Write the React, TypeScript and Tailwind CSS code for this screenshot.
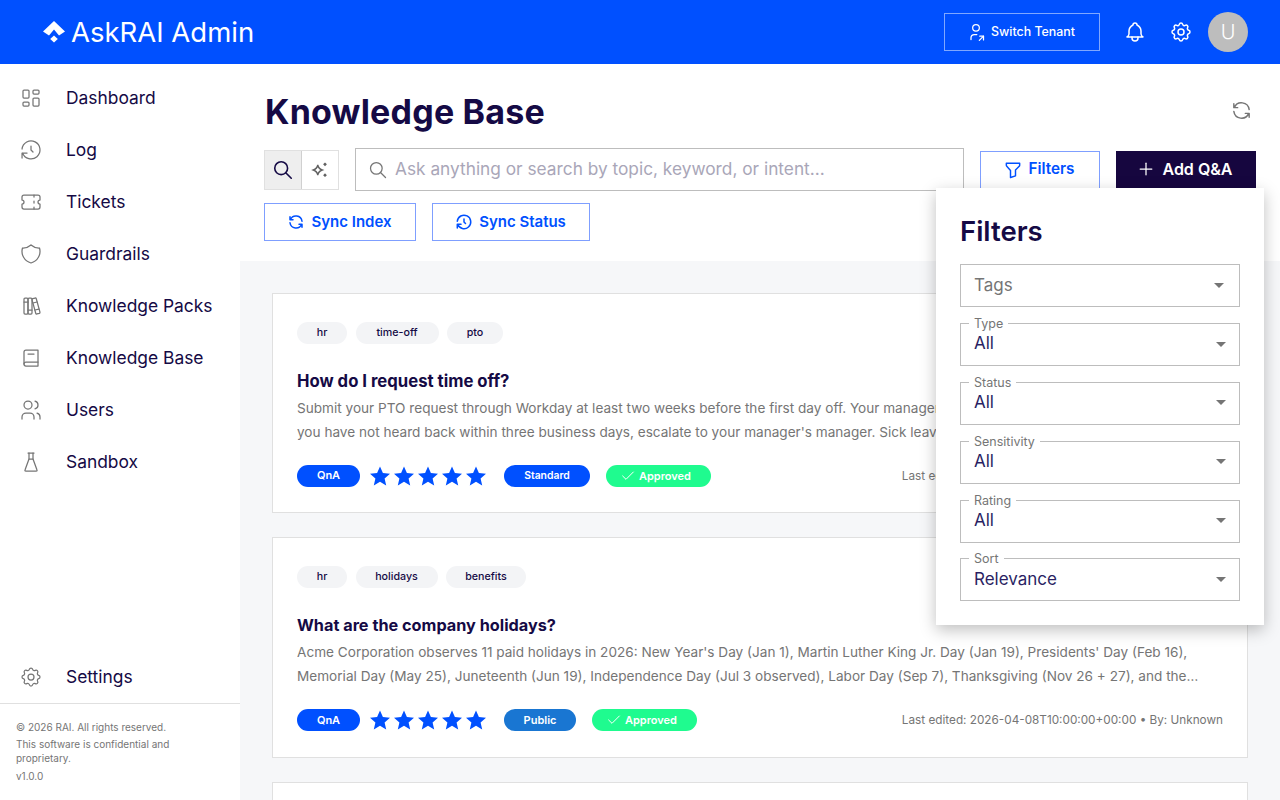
import { Check } from "lucide-react";
import { TbLayoutDashboard, TbHistory, TbTicket, TbShield, TbBooks, TbBook2, TbUsers, TbFlask, TbSettings, TbBell, TbUserShare, TbRefresh, TbSearch, TbFilter, TbPlus } from "react-icons/tb";

const navItems = [
  { label: "Dashboard", icon: TbLayoutDashboard },
  { label: "Log", icon: TbHistory },
  { label: "Tickets", icon: TbTicket },
  { label: "Guardrails", icon: TbShield },
  { label: "Knowledge Packs", icon: TbBooks },
  { label: "Knowledge Base", icon: TbBook2 },
  { label: "Users", icon: TbUsers },
  { label: "Sandbox", icon: TbFlask },
];

const entries = [
  {
    tags: [
      { label: "hr", width: "w-[50px]" },
      { label: "time-off", width: "w-[83px]" },
      { label: "pto", width: "w-[56px]" },
    ],
    title: "How do I request time off?",
    titleSize: "text-[16.7px]",
    lines: [
      "Submit your PTO request through Workday at least two weeks before the first day off. Your manager will review it and respond by email. If",
      "you have not heard back within three business days, escalate to your manager's manager. Sick leave does not need advance approval and the…",
    ],
    sensitivity: "Standard",
    sensitivityClass: "bg-[#0050ff] w-[86px] text-[10.4px]",
  },
  {
    tags: [
      { label: "hr", width: "w-[50px]" },
      { label: "holidays", width: "w-[82px]" },
      { label: "benefits", width: "w-[80px]" },
    ],
    title: "What are the company holidays?",
    titleSize: "text-[16.25px]",
    lines: [
      "Acme Corporation observes 11 paid holidays in 2026: New Year's Day (Jan 1), Martin Luther King Jr. Day (Jan 19), Presidents' Day (Feb 16),",
      "Memorial Day (May 25), Juneteenth (Jun 19), Independence Day (Jul 3 observed), Labor Day (Sep 7), Thanksgiving (Nov 26 + 27), and the…",
    ],
    sensitivity: "Public",
    sensitivityClass: "bg-[#1976d2] w-[72px] text-[11px]",
  },
];

const filters = [
  { label: "Type", value: "All" },
  { label: "Status", value: "All" },
  { label: "Sensitivity", value: "All" },
  { label: "Rating", value: "All" },
  { label: "Sort", value: "Relevance" },
];

function Caret() {
  return <span className="w-0 h-0 border-l-[5px] border-r-[5px] border-t-[5px] border-l-transparent border-r-transparent border-t-[#757575]" />;
}

function Logo() {
  return (
    <svg width="22" height="22" viewBox="0 0 22 22" fill="white">
      <path d="M11 0 L22 10.500 L16 14.500 L11 8.500 L6 14.500 L0 10.500 Z" />
      <path d="M11 14.500 L14.800 18 L11 21.500 L7.200 18 Z" />
    </svg>
  );
}

function SparkleIcon() {
  return (
    <svg width="20" height="20" viewBox="0 0 18 18" fill="none" stroke="#616161" strokeWidth="1.2">
      <path d="M7 4.500 C7.500 7 8.500 8.200 11 9 C8.500 9.800 7.500 11 7 13.500 C6.500 11 5.500 9.800 3 9 C5.500 8.200 6.500 7 7 4.500 Z" />
      <path d="M13.500 2.200 L15.200 3.900 L13.500 5.600 L11.800 3.900 Z" fill="#616161" stroke="none" />
      <path d="M13.500 12 L15.200 13.700 L13.500 15.400 L11.800 13.700 Z" fill="#616161" stroke="none" />
    </svg>
  );
}

function EntryCard({ entry }: { entry: (typeof entries)[number] }) {
  return (
    <div className="bg-white border border-[#e0e0e0] h-[220.4px] shrink-0 px-6 pt-[28px]">
      <div className="flex gap-[8.5px]">
        {entry.tags.map((tag) => (
          <span key={tag.label} className={`h-[22px] rounded-full bg-[#f3f4f6] text-[10.7px] font-medium text-[#150a45] flex items-center justify-center ${tag.width}`}>
            {tag.label}
          </span>
        ))}
      </div>
      <h3 className={`mt-[24.5px] leading-[24px] font-bold text-[#150a45] ${entry.titleSize}`}>{entry.title}</h3>
      <div className="mt-[3px] text-[13.6px] leading-[24px] text-[#757575]">
        {entry.lines.map((line) => (
          <p key={line} className="truncate">{line}</p>
        ))}
      </div>
      <div className="mt-[20.5px] flex items-center">
        <span className="w-[63px] h-[22px] pb-[1px] rounded-full bg-[#0050ff] text-white text-[11px] font-semibold flex items-center justify-center">QnA</span>
        <div className="ml-2 flex">
          {[0, 1, 2, 3, 4].map((i) => (
            <svg key={i} width="24" height="24" viewBox="0 0 24 24" fill="#0050ff">
              <path d="M12 2.500l2.900 6.600 7.100.7-5.400 4.700 1.600 7-6.200-3.700-6.200 3.700 1.600-7L2 9.800l7.100-.7z" />
            </svg>
          ))}
        </div>
        <span className={`ml-4 h-[22px] rounded-full text-white font-semibold flex items-center justify-center ${entry.sensitivityClass}`}>
          {entry.sensitivity}
        </span>
        <span className="ml-4 w-[105px] h-[22px] pr-[6px] rounded-full bg-[#1ffb8f] text-white text-[11px] font-semibold flex items-center justify-center gap-[3px]">
          <Check size={16} strokeWidth={1.5} />
          Approved
        </span>
        <span className="ml-auto mt-[1px] text-[11.75px] text-[#757575]">Last edited: 2026-04-08T10:00:00+00:00 • By: Unknown</span>
      </div>
    </div>
  );
}

export default function App() {
  return (
    <div className="relative w-[1280px] h-[800px] overflow-hidden bg-white font-['Inter',sans-serif] text-[#150a45]">
      <header className="h-16 bg-[#0050ff] flex items-center pl-[43px] pr-8">
        <Logo />
        <span className="ml-[6px] mt-[2px] text-[27.5px] text-white">AskRAI Admin</span>
        <button className="ml-auto w-[156px] h-[38px] border border-white/50 pr-[3px] flex items-center justify-center gap-[5px] text-white text-[12.4px] font-medium">
          <TbUserShare size={20} strokeWidth={1.5} />
          Switch Tenant
        </button>
        <TbBell size={24} strokeWidth={1.5} className="ml-[23px] text-white" />
        <TbSettings size={24} strokeWidth={1.5} className="ml-[22px] text-white" />
        <div className="ml-[15px] w-10 h-10 rounded-full bg-[#bdbdbd] text-white text-[20px] font-light flex items-center justify-center">U</div>
      </header>

      <div className="flex h-[736px]">
        <aside className="w-[240px] shrink-0 flex flex-col bg-white">
          <nav className="pt-[8px]">
            {navItems.map((item) => (
              <div key={item.label} className="h-[52px] flex items-center pl-[19px]">
                <item.icon size={24} strokeWidth={1.25} className="text-[#757575]" />
                <span className="ml-[23px] text-[17.4px]">{item.label}</span>
              </div>
            ))}
          </nav>
          <div className="mt-auto">
            <div className="h-[52px] flex items-center pl-[19px]">
              <TbSettings size={24} strokeWidth={1.25} className="text-[#757575]" />
              <span className="ml-[23px] text-[17.4px]">Settings</span>
            </div>
            <div className="border-t border-[#e0e0e0] h-[97px] px-4 pt-4 text-[10px] leading-[14px] text-[#757575]">
              <p>© 2026 RAI. All rights reserved.</p>
              <p className="mt-[3px]">This software is confidential and proprietary.</p>
              <p className="mt-1">v1.0.0</p>
            </div>
          </div>
        </aside>

        <main className="flex-1 flex flex-col min-w-0">
          <div className="h-[197px] shrink-0 px-6 pt-[25px]">
            <div className="flex items-center justify-between h-[44px]">
              <h1 className="ml-[1px] text-[34px] font-bold tracking-[0.2px]">Knowledge Base</h1>
              <TbRefresh size={23} strokeWidth={1.5} className="text-[#757575] mr-[3px] mb-[2px]" />
            </div>
            <div className="mt-[15px] flex items-center">
              <div className="flex border border-[#e0e0e0] h-10">
                <span className="w-[37px] bg-[#eeeeee] border-r border-[#d0d0d0] flex items-center justify-center">
                  <TbSearch size={22} strokeWidth={1.75} />
                </span>
                <span className="w-[36px] flex items-center justify-center">
                  <SparkleIcon />
                </span>
              </div>
              <div className="ml-4 w-[609px] h-[43px] border border-[#bdbdbd] flex items-center pl-3 pr-[14px] gap-[7px]">
                <TbSearch size={20} strokeWidth={1.5} className="text-[#757575]" />
                <span className="mb-[1px] text-[17.3px] text-[#a9a6b8]">Ask anything or search by topic, keyword, or intent...</span>
              </div>
              <button className="ml-4 w-[120px] h-[38px] border border-[#7f9fff] pr-[3px] flex items-center justify-center gap-[6px] text-[#0050ff] text-[15.3px] font-semibold">
                <TbFilter size={20} strokeWidth={1.75} />
                Filters
              </button>
              <button className="ml-4 w-[140px] h-[37px] bg-[#16063f] pr-[3px] pb-[1px] flex items-center justify-center gap-[6px] text-white text-[16px] font-semibold">
                <TbPlus size={20} strokeWidth={1.5} />
                Add Q&amp;A
              </button>
            </div>
            <div className="mt-[12px] flex gap-4">
              <button className="w-[152px] h-[38px] border border-[#7f9fff] pr-[1px] flex items-center justify-center gap-[6px] text-[#0050ff] text-[15px] font-semibold">
                <TbRefresh size={18} strokeWidth={2} />
                Sync Index
              </button>
              <button className="w-[158px] h-[38px] border border-[#7f9fff] pr-[1px] flex items-center justify-center gap-[6px] text-[#0050ff] text-[15px] font-semibold">
                <TbHistory size={18} strokeWidth={2} />
                Sync Status
              </button>
            </div>
          </div>
          <div className="flex-1 min-h-0 overflow-hidden bg-[#f6f7f9] px-8 pt-8 flex flex-col gap-6">
            {entries.map((entry) => (
              <EntryCard key={entry.title} entry={entry} />
            ))}
            <div className="bg-white border border-[#e0e0e0] h-[220.4px] shrink-0" />
          </div>
        </main>
      </div>

      <div className="absolute left-[936px] top-[188px] w-[328px] h-[437px] bg-white shadow-[0_5px_15px_rgba(0,0,0,0.25)] px-6 pt-[24px]">
        <h2 className="text-[27.5px] leading-[38px] font-semibold">Filters</h2>
        <div className="mt-[14px] h-[43px] border border-[#bdbdbd] flex items-center justify-between pl-[13px] pr-[15px] text-[17px] text-[#757575]">
          Tags
          <Caret />
        </div>
        <div className="mt-4 flex flex-col gap-[15.85px]">
          {filters.map((f) => (
            <div key={f.label} className="relative h-[43px] border border-[#bdbdbd] flex items-center justify-between pl-[13px] pr-[13px] pb-[1px]">
              <span className="absolute -top-[8px] left-[8px] bg-white px-[5px] text-[12.5px] leading-[16px] text-[#757575]">{f.label}</span>
              <span className="text-[17px] text-[#2a1f63]">{f.value}</span>
              <Caret />
            </div>
          ))}
        </div>
      </div>
    </div>
  );
}
